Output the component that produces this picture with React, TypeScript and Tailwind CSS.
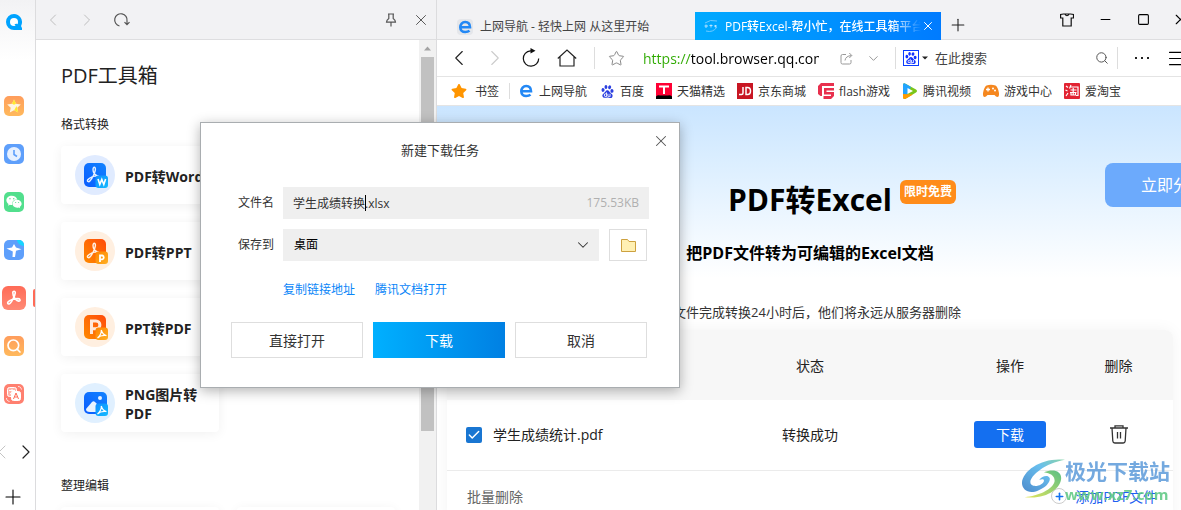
import React from "react";
import { ChevronLeft, ChevronRight, ChevronDown, X, Plus, Search, Star, Minus, Square, Menu, Check } from "lucide-react";
import { FaStar, FaWeixin } from "react-icons/fa";
import { SiBaidu } from "react-icons/si";

const Trefoil = ({ className }: { className?: string }) => (
  <svg viewBox="0 0 24 24" className={className} fill="none" stroke="currentColor" strokeWidth="2.4" strokeLinejoin="round">
    <path d="M10.200 4.200c0-3 4-3 3.700 0C13.500 8.500 9 17 6.300 20c-2 2.200-5 .2-3.300-2 2.400-3 10-5 15-5 4 0 4 4.200.8 3.700C14.500 16 10.200 9 10.200 4.200z" />
  </svg>
);

const ReloadIcon = ({ className }: { className?: string }) => (
  <svg viewBox="0 0 20 20" className={className} fill="none" stroke="currentColor" strokeWidth="1.2">
    <path d="M12 2.800H9.500A7.700 7.700 0 1 0 17.700 10.500" />
    <path d="M9.500 0l5 2.800-5 2.700z" fill="currentColor" stroke="none" />
  </svg>
);

const ReloadDown = ({ className }: { className?: string }) => (
  <svg viewBox="0 0 18 18" className={className} fill="none" stroke="currentColor" strokeWidth="1.2">
    <path d="M6.500 15A6.200 6.200 0 1 1 14 10v3.500M11.500 11.200l2.500 2.500 2.500-2.500" />
  </svg>
);

const BrowserE = ({ className }: { className?: string }) => (
  <svg viewBox="0 0 16 16" className={className} fill="none">
    <path d="M3.300 8.300h9.700C13 4.600 10.900 3 8.200 3 5.200 3 3.300 5.300 3.300 8.200c0 3 2 4.800 4.900 4.800 1.900 0 3.300-.5 4.300-1.400" stroke="#2388f5" strokeWidth="2.600" />
  </svg>
);

type Badge = "word" | "ppt" | "p2pdf" | "png";

function ToolIcon({ kind }: { kind: Badge }) {
  const blue = kind === "word" || kind === "png";
  const id = `tool-${kind}`;
  return (
    <svg viewBox="0 0 40 40" className="size-10 shrink-0" aria-hidden="true">
      <defs>
        <linearGradient id={id} x1="1" y1="0" x2="0" y2="1">
          <stop stopColor={blue ? "#1283ff" : "#ff4a0a"} />
          <stop offset="1" stopColor={blue ? "#0a5cff" : "#ff8a00"} />
        </linearGradient>
        <linearGradient id={`${id}-b`} x1="0" y1="0" x2="1" y2="1">
          <stop stopColor={blue ? "#0f8dff" : "#ff8400"} />
          <stop offset="1" stopColor={blue ? "#14bbff" : "#ffb023"} />
        </linearGradient>
      </defs>
      <circle cx="20" cy="20" r="20" fill={kind === "word" ? "#e0ebff" : kind === "png" ? "#e0f0ff" : "#ffefe0"} />
      <rect x="9" y={kind === "png" ? 9 : 8} width={kind === "png" ? 23 : 22} height={kind === "png" ? 22 : 24} rx="5" fill={`url(#${id})`} />
      {(kind === "word" || kind === "ppt") && (
        <g transform="translate(11.500 12) scale(.64)" fill="none" stroke="#fff" strokeWidth="2.200" opacity=".9">
          <path d="M10.200 4.200c0-5 4-5 3.700 0C13.500 8.500 9 18 5.300 22c-2 2.200-5 .2-3.300-2 2.400-3 10-7 17-6M10.200 4.200c0 4 3 8 8 10.500" />
        </g>
      )}
      {kind === "p2pdf" && <path d="M16.500 27V14h4.500a3.800 3.800 0 0 1 0 7.800h-4.500" fill="none" stroke="#ffe9d9" strokeWidth="3" />}
      {kind === "png" && (
        <g fill="#e8f3ff">
          <circle cx="25" cy="15" r="2" />
          <path d="M11 26l6-7c1-1 2-1 3 0l6 6v4H15c-3 0-4-1-4-3z" />
        </g>
      )}
      <rect x="20.500" y="20.500" width="12.500" height="12.500" rx="3" fill={`url(#${id}-b)`} />
      {kind === "word" && <path d="M23 24l1.800 5.500 2-5 2 5 1.800-5.500" fill="none" stroke="#fff" strokeWidth="1.600" />}
      {kind === "ppt" && <path d="M25 31v-6.500h2.200a2 2 0 0 1 0 3.900H25" fill="none" stroke="#fff" strokeWidth="1.800" />}
      {(kind === "p2pdf" || kind === "png") && (
        <path d="M26.300 23c.8 2.800 2 4.800 5 5.600M26.300 23c.4 3.500-1.500 6-3.800 8 2-2 5.500-3 9-2.500" fill="none" stroke="#fff" strokeWidth="1.200" />
      )}
    </svg>
  );
}

const tools: { kind: Badge; label: string }[] = [
  { kind: "word", label: "PDF转Word" },
  { kind: "ppt", label: "PDF转PPT" },
  { kind: "p2pdf", label: "PPT转PDF" },
  { kind: "png", label: "PNG图片转PDF" },
];

const railTile = "flex size-5 items-center justify-center rounded-[5px] text-white";

function Rail() {
  return (
    <nav className="flex w-9 shrink-0 flex-col border-r border-[#dcdcde] bg-gradient-to-b from-[#f2f2f4] from-0% to-white to-[60px]">
      <button aria-label="QQ浏览器" className="ml-[6px] mt-[14px] size-4">
        <svg viewBox="0 0 16 16" className="size-4">
          <path d="M8 0a8 8 0 0 1 7.300 11.300c-.5 1.300.3 2 .7 2.700V16H8A8 8 0 0 1 8 0z" fill="#00a3ff" />
          <circle cx="8" cy="8" r="4" fill="#fff" />
          <path d="M8.500 10.500c1.500-1 2.500-1 4 .8L10.500 13z" fill="#00a3ff" />
        </svg>
      </button>
      <div className="ml-1 mt-[66px] flex flex-col gap-7">
        <button aria-label="收藏" className={`${railTile} bg-gradient-to-b from-[#ff9d5c] to-[#ffb95c]`}>
          <svg viewBox="0 0 20 20" className="size-5">
            <path d="M10 3.500l2 4.300 4.800.6-3.500 3.300.9 4.800L10 14.200l-4.200 2.300.9-4.800L3.200 8.400 8 7.800z" fill="#fff5e0" />
            <path d="M10 3.500l2 4.300-2 1-2-1zM12.500 10l1.700 6.500-4-2.300z" fill="#ffe600" opacity=".8" />
          </svg>
        </button>
        <button aria-label="历史" className={`${railTile} bg-[#5e9ffb]`}>
          <svg viewBox="0 0 20 20" className="size-5">
            <circle cx="10" cy="10" r="7" fill="#e6f0ff" />
            <path d="M10 6v4.500l3 2" fill="none" stroke="#5e9ffb" strokeWidth="1.600" />
          </svg>
        </button>
        <button aria-label="微信" className={`${railTile} bg-[#52df8d]`}>
          <FaWeixin className="size-4" />
        </button>
        <button aria-label="快捷" className={`${railTile} bg-[#5e9ffb]`}>
          <svg viewBox="0 0 20 20" className="size-5">
            <path d="M13 0h2a5 5 0 0 1 5 5v1c-3 0-7-3-7-6z" fill="#17d5ff" />
            <path d="M2.500 8.500L8 7.500 10 4l2 3.500 5.500 1.800-5.500 1.500L11 17H8.500l.3-5.500z" fill="#fff" />
          </svg>
        </button>
      </div>
      <div className="mt-[26px] flex items-center justify-between pl-[2px]">
        <button aria-label="PDF工具箱" className="flex size-6 items-center justify-center rounded-md bg-gradient-to-b from-[#ff6b57] to-[#ff8a75] text-white">
          <Trefoil className="size-4" />
        </button>
        <span className="h-[18px] w-[2px] rounded-l-sm bg-[#ff6b57]" />
      </div>
      <div className="ml-1 mt-[26px] flex flex-col gap-7">
        <button aria-label="搜索" className={`${railTile} bg-gradient-to-b from-[#ff9d5c] to-[#ffb95c]`}>
          <Search className="size-4" strokeWidth={2.5} />
        </button>
        <button aria-label="识别" className={`${railTile} bg-[#ff8070]`}>
          <svg viewBox="0 0 20 20" className="size-5" fill="none" stroke="#fff">
            <rect x="3.500" y="3.500" width="9" height="9" rx="2" fill="#ffb5aa" />
            <path d="M5 6.500h6M8 5v3M6 10l4-3" />
            <rect x="7.500" y="7.500" width="9" height="9" rx="2" fill="#fff" />
            <path d="M9.500 15l2.500-6 2.500 6M10.500 13h3" stroke="#ff6b57" />
            <path d="M14 2.500c2 0 3 1 3.500 3M2.500 14c0 2 1 3 3 3.500" strokeWidth=".8" />
          </svg>
        </button>
      </div>
      <div className="mt-[36px] flex items-center justify-between">
        <button aria-label="上一页" className="-ml-[10px] text-[#c4c4c4]"><ChevronLeft className="size-6" strokeWidth={1} /></button>
        <button aria-label="下一页" className="text-[#222]"><ChevronRight className="size-6" strokeWidth={1.2} /></button>
      </div>
      <button aria-label="添加" className="ml-px mt-[21px] text-black"><Plus className="size-6" strokeWidth={1.1} /></button>
    </nav>
  );
}

function ToolPanel() {
  return (
    <section className="flex w-[401px] shrink-0 flex-col border-r border-[#dcdcde] bg-white">
      <header className="flex h-10 shrink-0 items-center border-b border-[#dedee0] bg-[#f2f2f4]">
        <button aria-label="后退" className="flex w-[34px] justify-center text-[#b8b8b8]"><ChevronLeft className="size-5" strokeWidth={1.1} /></button>
        <button aria-label="前进" className="flex w-[34px] justify-center text-[#b8b8b8]"><ChevronRight className="size-5" strokeWidth={1.1} /></button>
        <button aria-label="刷新" className="flex w-[36px] justify-center text-[#555]"><ReloadDown className="size-[18px]" /></button>
        <div className="flex-1" />
        <button aria-label="固定" className="flex w-[30px] justify-center text-[#555]">
          <svg viewBox="0 0 14 14" className="size-[14px]" fill="none" stroke="currentColor" strokeWidth="1.200"><path d="M4 1h6M4.800 1v4.500Q2.500 7 2.500 9.200h9Q11.500 7 9.200 5.500V1M7 9.200V13.500" /></svg>
        </button>
        <button aria-label="关闭面板" className="flex w-[30px] justify-center text-[#555]"><X className="size-[18px]" strokeWidth={1.3} /></button>
      </header>
      <div className="flex min-h-0 flex-1">
        <div className="min-w-0 flex-1 overflow-hidden pl-[25px] pr-[24px]">
          <h2 className="mt-[22px] text-[20px] leading-7 text-[#222]">PDF工具箱</h2>
          <h3 className="mt-[25px] text-[12px] leading-5 text-[#222]">格式转换</h3>
          <div className="mt-[11px] grid grid-cols-[158px_158px] gap-x-[18px] gap-y-[18px]">
            {tools.map((t) => (
              <button key={t.kind} className="col-start-1 flex h-[58px] items-center gap-[10px] rounded bg-white pl-[14px] pr-2 text-left text-[14px] font-bold leading-[19px] text-[#222] shadow-[0_2px_12px_rgba(0,0,0,0.06)]">
                <ToolIcon kind={t.kind} />
                <span className="pt-[2px]">{t.label}</span>
              </button>
            ))}
          </div>
          <h3 className="mt-[44px] text-[12px] leading-5 text-[#222]">整理编辑</h3>
          <div className="mt-[11px] grid grid-cols-[158px_158px] gap-[18px]">
            <div className="h-[58px] rounded shadow-[0_2px_12px_rgba(0,0,0,0.06)]" />
            <div className="h-[58px] rounded shadow-[0_2px_12px_rgba(0,0,0,0.06)]" />
          </div>
        </div>
        <div className="flex w-[17px] shrink-0 flex-col items-center bg-[#f1f1f1]">
          <svg viewBox="0 0 17 17" className="size-[17px] shrink-0"><path d="M5 10.500l3.500-4 3.500 4z" fill="#a3a3a3" /></svg>
          <div className="h-[374px] w-[13px] bg-[#c1c1c1]" />
        </div>
      </div>
    </section>
  );
}

const bookmarks: { label: string; icon: React.ReactNode }[] = [
  { label: "上网导航", icon: <BrowserE className="size-4" /> },
  { label: "百度", icon: <SiBaidu className="size-[13px] text-[#2b3fe0]" /> },
  {
    label: "天猫精选",
    icon: (
      <svg viewBox="0 0 16 16" className="size-4"><path d="M0 0h16v16H0z" fill="#ff0034" /><path d="M0 13.500q2-2 4-1h8q2-1 4 1V16H0z" /><path d="M3 3.500h10M8 3.500V11" stroke="#fff" strokeWidth="2" /></svg>
    ),
  },
  {
    label: "京东商城",
    icon: (
      <svg viewBox="0 0 16 16" className="size-4"><path d="M0 0h16v16H0z" fill="#c81623" /><path d="M6 4v6q0 1.500-1.500 1.500H2M9 4.500v7h1.500q3 0 3-3.500t-3-3.500z" fill="none" stroke="#fff" strokeWidth="1.500" /></svg>
    ),
  },
  {
    label: "flash游戏",
    icon: (
      <svg viewBox="0 0 16 16" className="size-4"><path d="M3 0h13v3H4v10H2.500L0 11V3z" fill="#e8304e" /><path d="M6 5h10v2.500H8.500V9H16v4l-3 3H5.500v-3H13v-1.500H6z" fill="#e8304e" /></svg>
    ),
  },
  {
    label: "腾讯视频",
    icon: (
      <svg viewBox="0 0 16 16" className="size-4"><path d="M1 2q0-3 3-1l10 5.500q2 1.500 0 3L4 15.500Q1 17 1 14z" fill="#7ac619" /><path d="M1 2q0-3 3-1l5 3-5 10-3-2z" fill="#22a4ff" /><path d="M1 11v3q0 3 3 1.500l7-4z" fill="#ff9b00" /><path d="M5.500 5l5.500 3-5.500 3z" fill="#fff" /></svg>
    ),
  },
  {
    label: "游戏中心",
    icon: (
      <svg viewBox="0 0 16 16" className="size-4"><path d="M3.500 2.500Q8 1 12.500 2.500 15 4 16 10q.3 4-1.500 4-1.500 0-3-2h-7Q3 14 1.500 14-.3 14 0 10 1 4 3.500 2.500z" fill="#f5871f" /><path d="M5 4.500v4M3 6.500h4" stroke="#fff" strokeWidth="1.300" /><circle cx="10" cy="5.500" r="1" fill="#fff" /><circle cx="12" cy="7.500" r="1" fill="#fff" /></svg>
    ),
  },
  {
    label: "爱淘宝",
    icon: (
      <svg viewBox="0 0 16 16" className="size-4"><rect width="16" height="16" rx="1" fill="#e22332" /><path d="M2 3l2 1.500M1.500 7L3.500 8M2 13l2-3M7 2L5.500 5.500M6.500 4H14v8.500h-2M6.500 7h6M6 9.500h6.500M9.200 5v6.500M7 10v2h4.500v-2" fill="none" stroke="#fff" strokeWidth="1.200" /></svg>
    ),
  },
];

function Chrome() {
  return (
    <>
      <div className="flex h-10 shrink-0 border-b border-[#dedee0] bg-[#f2f2f4]">
        <div className="flex shrink-0 items-end">
          <button className="flex h-7 w-[258px] items-center gap-[7px] pl-5 pt-[3px] text-[12px] text-[#444]">
            <BrowserE className="size-4 rounded bg-[#e4e6ea]" />
            上网导航 - 轻快上网 从这里开始
          </button>
          <div className="-mb-px flex h-7 w-[246px] items-center bg-gradient-to-r from-[#00aaff] to-[#007bff] pl-2 pr-[6px] text-white">
            <svg viewBox="0 0 16 16" className="size-4 shrink-0" fill="none" stroke="#6fcbff">
              <path d="M2 5q5-4 12-2M3 13q7 2 11-4" />
              <path d="M1.500 8h3.500M3 6.500v3.500M6.500 7.500H9.500M8 6.500v3M11 8h3M12.500 7v2.500" stroke="#bfe6ff" strokeWidth=".9" />
            </svg>
            <button className="ml-[6px] min-w-0 flex-1 overflow-hidden whitespace-nowrap pt-px text-left text-[12px] font-medium [mask-image:linear-gradient(to_right,#000_85%,transparent)]">
              PDF转Excel-帮小忙，在线工具箱平台
            </button>
            <button aria-label="关闭标签"><X className="size-[14px]" strokeWidth={1.7} /></button>
          </div>
          <button aria-label="新建标签" className="flex h-7 w-[34px] items-center justify-center text-[#222]"><Plus className="size-5" strokeWidth={1.3} /></button>
        </div>
        <div className="-mr-[17px] ml-auto flex items-center">
          <button aria-label="皮肤" className="flex w-[38px] justify-center">
            <svg viewBox="0 0 14 14" className="size-[14px]" fill="none" stroke="#111" strokeWidth="1.200"><path d="M3.500 1h7l3 .5V5h-2.300v8H2.800V5H.6V1.500zM4.800 1q2.200 3.500 4.400 0" /></svg>
          </button>
          <button aria-label="最小化" className="flex w-[38px] justify-center"><Minus className="size-[15px]" strokeWidth={1.8} /></button>
          <button aria-label="最大化" className="flex w-[38px] justify-center"><Square className="size-[13px]" strokeWidth={2} /></button>
          <button aria-label="关闭" className="flex w-[36px] justify-center"><X className="size-[17px]" strokeWidth={1.6} /></button>
        </div>
      </div>

      <div className="flex h-[37px] shrink-0 items-center border-b border-[#e4e4e4] bg-white pl-1">
        <button aria-label="后退" className="flex w-9 justify-center text-[#222]"><ChevronLeft className="size-[26px]" strokeWidth={1} /></button>
        <button aria-label="前进" className="flex w-9 justify-center text-[#ccc]"><ChevronRight className="size-[26px]" strokeWidth={1} /></button>
        <button aria-label="刷新" className="flex w-9 justify-center text-[#111]"><ReloadIcon className="size-5" /></button>
        <button aria-label="主页" className="flex w-9 justify-center">
          <svg viewBox="0 0 20 18" className="h-[18px] w-5" fill="none" stroke="#222" strokeWidth="1.200"><path d="M.8 9.500L10 1l9.200 8.500M3 8v9h14V8" /></svg>
        </button>
        <span className="ml-[9px] h-[22px] w-px bg-[#ddd]" />
        <button aria-label="收藏本页" className="flex w-[42px] justify-center text-[#888]"><Star className="size-[17px]" strokeWidth={1.4} /></button>
        <input
          aria-label="地址"
          readOnly
          value="https://tool.browser.qq.com"
          className="ml-[6px] h-7 w-0 min-w-0 flex-1 bg-[linear-gradient(to_right,#2eaa00_48px,#000_48px)] bg-clip-text text-[14px] text-transparent outline-none"
        />
        <button aria-label="分享" className="ml-[14px] flex w-[27px] justify-center text-[#999]">
          <svg viewBox="0 0 13 13" className="size-[13px]" fill="none" stroke="currentColor"><path d="M6 2.500H2.500q-1.500 0-1.500 1.500v6.500Q1 12 2.500 12h7q1.500 0 1.500-1.500V8M5 8.500Q5.500 4 11.500 3.500M9.300 1l2.500 2.500L9.300 6" /></svg>
        </button>
        <button aria-label="展开" className="flex w-[27px] justify-center text-[#999]"><ChevronDown className="size-[15px]" strokeWidth={1.6} /></button>
        <span className="ml-[8px] h-[22px] w-px bg-[#ddd]" />
        <button aria-label="搜索引擎" className="ml-[7px] flex items-center gap-[3px]">
          <span className="flex size-4 items-center justify-center border border-[#0a3cff]"><SiBaidu className="size-3 text-[#1233ff]" /></span>
          <svg viewBox="0 0 6 4" className="h-1 w-[6px]"><path d="M0 .5h6l-3 3z" fill="#222" /></svg>
        </button>
        <input aria-label="搜索" placeholder="在此搜索" className="ml-[7px] h-7 w-[152px] text-[13px] outline-none placeholder:text-[#444]" />
        <button aria-label="开始搜索" className="ml-2 text-[#555]"><Search className="size-[14px]" strokeWidth={1.7} /></button>
        <span className="ml-2 h-[22px] w-px bg-[#ddd]" />
        <button aria-label="更多" className="flex w-[48px] justify-center">
          <svg viewBox="0 0 14 2" className="h-[2px] w-[14px]"><path d="M0 0h2v2H0zM6 0h2v2H6zM12 0h2v2h-2z" fill="#222" /></svg>
        </button>
        <button aria-label="菜单" className="ml-[2px] w-[13px] overflow-hidden"><Menu className="-ml-[2px] size-[21px] max-w-none" strokeWidth={1.2} /></button>
      </div>

      <div className="flex h-[29px] shrink-0 items-center overflow-hidden whitespace-nowrap border-b border-[#e4e4e4] bg-white pl-[14px] text-[12px] leading-5 text-[#333]">
        <a href="#bookmarks" className="flex items-center gap-2"><FaStar className="size-4 text-[#ff9500]" /><span className="pt-[2px]">书签</span></a>
        <span className="ml-[10px] mr-[8px] h-4 w-px bg-[#ddd]" />
        <div className="flex gap-3">
          {bookmarks.map((b) => (
            <a key={b.label} href="#open" className="flex items-center gap-[5px]">
              <span className="flex size-4 items-center justify-center">{b.icon}</span>
              <span className="pt-[2px]">{b.label}</span>
            </a>
          ))}
        </div>
      </div>
    </>
  );
}

function Page() {
  return (
    <main className="relative flex min-h-0 flex-1 flex-col items-center overflow-hidden bg-[linear-gradient(to_bottom,#cae5ff,#dbeeff_55px,#fff_172px)] pl-[10px] pr-2">
      <p className="-mt-[17px] ml-[300px] shrink-0 text-[13px] leading-[20px] text-[#1e7ff5]">文件格式、在线转换全面、批量处理</p>
      <h1 className="relative mt-[71px] shrink-0 text-[30px] font-bold leading-10 text-black">
        PDF转Excel
        <span className="absolute left-full top-0 ml-2 flex h-6 w-14 items-center justify-center whitespace-nowrap rounded-md bg-[#ff8c1a] text-[12px] font-bold text-white">限时免费</span>
      </h1>
      <p className="mt-[21px] shrink-0 text-[16px] font-bold leading-6 text-black">把PDF文件转为可编辑的Excel文档</p>
      <p className="mt-[37px] shrink-0 pl-[14px] text-[13px] leading-5 text-[#333]">文件完成转换24小时后，他们将永远从服务器删除</p>
      <button className="absolute -right-[60px] top-[57px] h-11 w-[136px] rounded-lg bg-[#6caafc] text-[16px] text-white">立即分享</button>

      <div className="mt-2 w-full shrink-0 overflow-hidden rounded-t-lg bg-white shadow-[0_0_16px_rgba(0,0,0,0.05)]">
        <table className="w-full table-fixed text-[14px] text-[#222]">
          <thead className="bg-[#f7f7f7]">
            <tr className="h-[70px]">
              <th className="pl-5 text-left font-normal">文件名</th>
              <th className="w-[292px] font-normal">状态</th>
              <th className="w-[108px] font-normal">操作</th>
              <th className="w-[109px] font-normal">删除</th>
            </tr>
          </thead>
          <tbody>
            <tr className="h-[70px] border-b border-[#ebebeb]">
              <td className="pl-[19px]">
                <label className="flex items-center gap-[11px] whitespace-nowrap">
                  <span className="relative flex size-4">
                    <input type="checkbox" defaultChecked className="size-4 appearance-none rounded-[2px] bg-[#1976d2]" />
                    <Check className="pointer-events-none absolute left-[1px] top-[1px] size-[14px] text-white" strokeWidth={2.5} />
                  </span>
                  学生成绩统计.pdf
                </label>
              </td>
              <td className="text-center">转换成功</td>
              <td className="text-center">
                <button className="h-[27px] w-[72px] rounded-[3px] bg-[#146ff0] text-white">下载</button>
              </td>
              <td>
                <button aria-label="删除" className="mx-auto block">
                  <svg viewBox="0 0 18 19" className="h-[19px] w-[18px]" fill="none" stroke="#333" strokeWidth="1.300"><path d="M0 3h18M5 3V.8h8V3M2 3l.8 13q.2 2 2 2h8.400q1.800 0 2-2L16 3M7.500 7v6.500M10.500 7v6.500" /></svg>
                </button>
              </td>
            </tr>
          </tbody>
        </table>
        <div className="flex h-[51px] items-center justify-between pl-5 pr-4 text-[14px]">
          <button className="text-[#666]">批量删除</button>
          <button className="flex items-center gap-2 text-[#1f5ff0]">
            <span className="flex size-4 items-center justify-center rounded-full border border-[#ccc] bg-white"><Plus className="size-[11px] text-[#1572f0]" strokeWidth={3.5} /></span>
            添加PDF文件
          </button>
        </div>
      </div>

      <div className="pointer-events-none absolute bottom-[6px] right-[11px] flex items-start opacity-90" aria-hidden="true">
        <svg viewBox="0 0 46 42" className="h-[42px] w-11">
          <defs>
            <linearGradient id="wm-a" x1="0" y1="1" x2="1" y2="0"><stop stopColor="#3a7fc8" /><stop offset=".6" stopColor="#58b8ec" /><stop offset="1" stopColor="#7fd0a0" /></linearGradient>
            <linearGradient id="wm-b" x1="0" y1="1" x2="1" y2="0"><stop stopColor="#e2e34a" /><stop offset="1" stopColor="#48b878" /></linearGradient>
          </defs>
          <path d="M46 1C24-2 2 11 1 25c0 8 8 12 17 8 8-3 13-9 12-13-2-4-8-2-11 2 3-1 5-1 5 1-1 4-9 7-13 4C5 22 22 5 46 1z" fill="url(#wm-a)" />
          <path d="M24 14c9-4 18-2 18 6 0 11-16 23-38 20 14-1 29-8 31-16 1-6-4-9-11-10z" fill="url(#wm-b)" />
        </svg>
        <div className="flex flex-col whitespace-nowrap font-bold">
          <span className="text-[21px] leading-[26px] text-[#65a0dc]">极光下载站</span>
          <span className="text-[15px] leading-5 text-[#63ca87]">www.xz7.com</span>
        </div>
      </div>
    </main>
  );
}

function DownloadDialog() {
  return (
    <form
      role="dialog"
      aria-label="新建下载任务"
      onSubmit={(e) => e.preventDefault()}
      className="absolute left-[200px] top-1/2 w-[480px] -translate-y-1/2 border border-[#a9adb0] bg-white pb-[29px] pl-[30px] pr-[30px] pt-[17px] text-[12px] text-[#333] shadow-[0_3px_12px_rgba(0,0,0,0.3)]"
    >
      <button type="button" aria-label="关闭" className="absolute right-[9px] top-[9px] text-[#555]"><X className="size-[18px]" strokeWidth={1.4} /></button>
      <h2 className="text-center text-[13px] leading-5">新建下载任务</h2>
      <div className="mt-[27px] flex items-center">
        <label htmlFor="file-name" className="w-[52px] pl-[7px]">文件名</label>
        <div className="relative flex h-8 flex-1 items-center bg-[#efefef] pl-[10px] pr-[10px]">
          <input id="file-name" defaultValue="学生成绩转换.xlsx" className="h-full w-0 min-w-0 flex-1 outline-none" />
          <span className="absolute left-[82px] top-2 h-4 w-px bg-black" />
          <span className="text-[12px] text-[#b0b0b0]">175.53KB</span>
        </div>
      </div>
      <div className="mt-[10px] flex items-center">
        <label htmlFor="save-to" className="w-[52px] pl-[7px]">保存到</label>
        <div className="relative flex-1">
          <select id="save-to" className="h-8 w-full appearance-none bg-[#efefef] pl-[11px] text-[12px] text-black outline-none">
            <option>桌面</option>
          </select>
          <ChevronDown className="pointer-events-none absolute right-[7px] top-[7px] size-[18px]" strokeWidth={1.4} />
        </div>
        <button type="button" aria-label="选择文件夹" className="ml-[10px] mr-[2px] flex h-8 w-[38px] items-center justify-center border border-[#dedede]">
          <svg viewBox="0 0 15 13" className="h-[13px] w-[15px]"><path d="M.5.500h6l1.500 2h6.500v10H.5z" fill="#fff0b3" stroke="#cda13f" /></svg>
        </button>
      </div>
      <div className="mt-[19px] flex gap-5 pl-[52px] leading-5 text-[#0b86f8]">
        <a href="#copy">复制链接地址</a>
        <a href="#docs">腾讯文档打开</a>
      </div>
      <div className="mr-[2px] mt-[22px] grid grid-cols-3 gap-[10px] text-[14px]">
        <button type="button" className="h-9 border border-[#dedede]">直接打开</button>
        <button type="submit" className="h-9 bg-gradient-to-r from-[#00b0ff] to-[#0080e3] text-white">下载</button>
        <button type="button" className="h-9 border border-[#dedede]">取消</button>
      </div>
    </form>
  );
}

export default function App() {
  return (
    <div className="relative flex h-screen overflow-hidden bg-white font-['Open_Sans','Noto_Sans_CJK_SC',sans-serif]">
      <Rail />
      <ToolPanel />
      <div className="flex min-w-0 flex-1 flex-col overflow-hidden">
        <Chrome />
        <Page />
      </div>
      <DownloadDialog />
    </div>
  );
}
